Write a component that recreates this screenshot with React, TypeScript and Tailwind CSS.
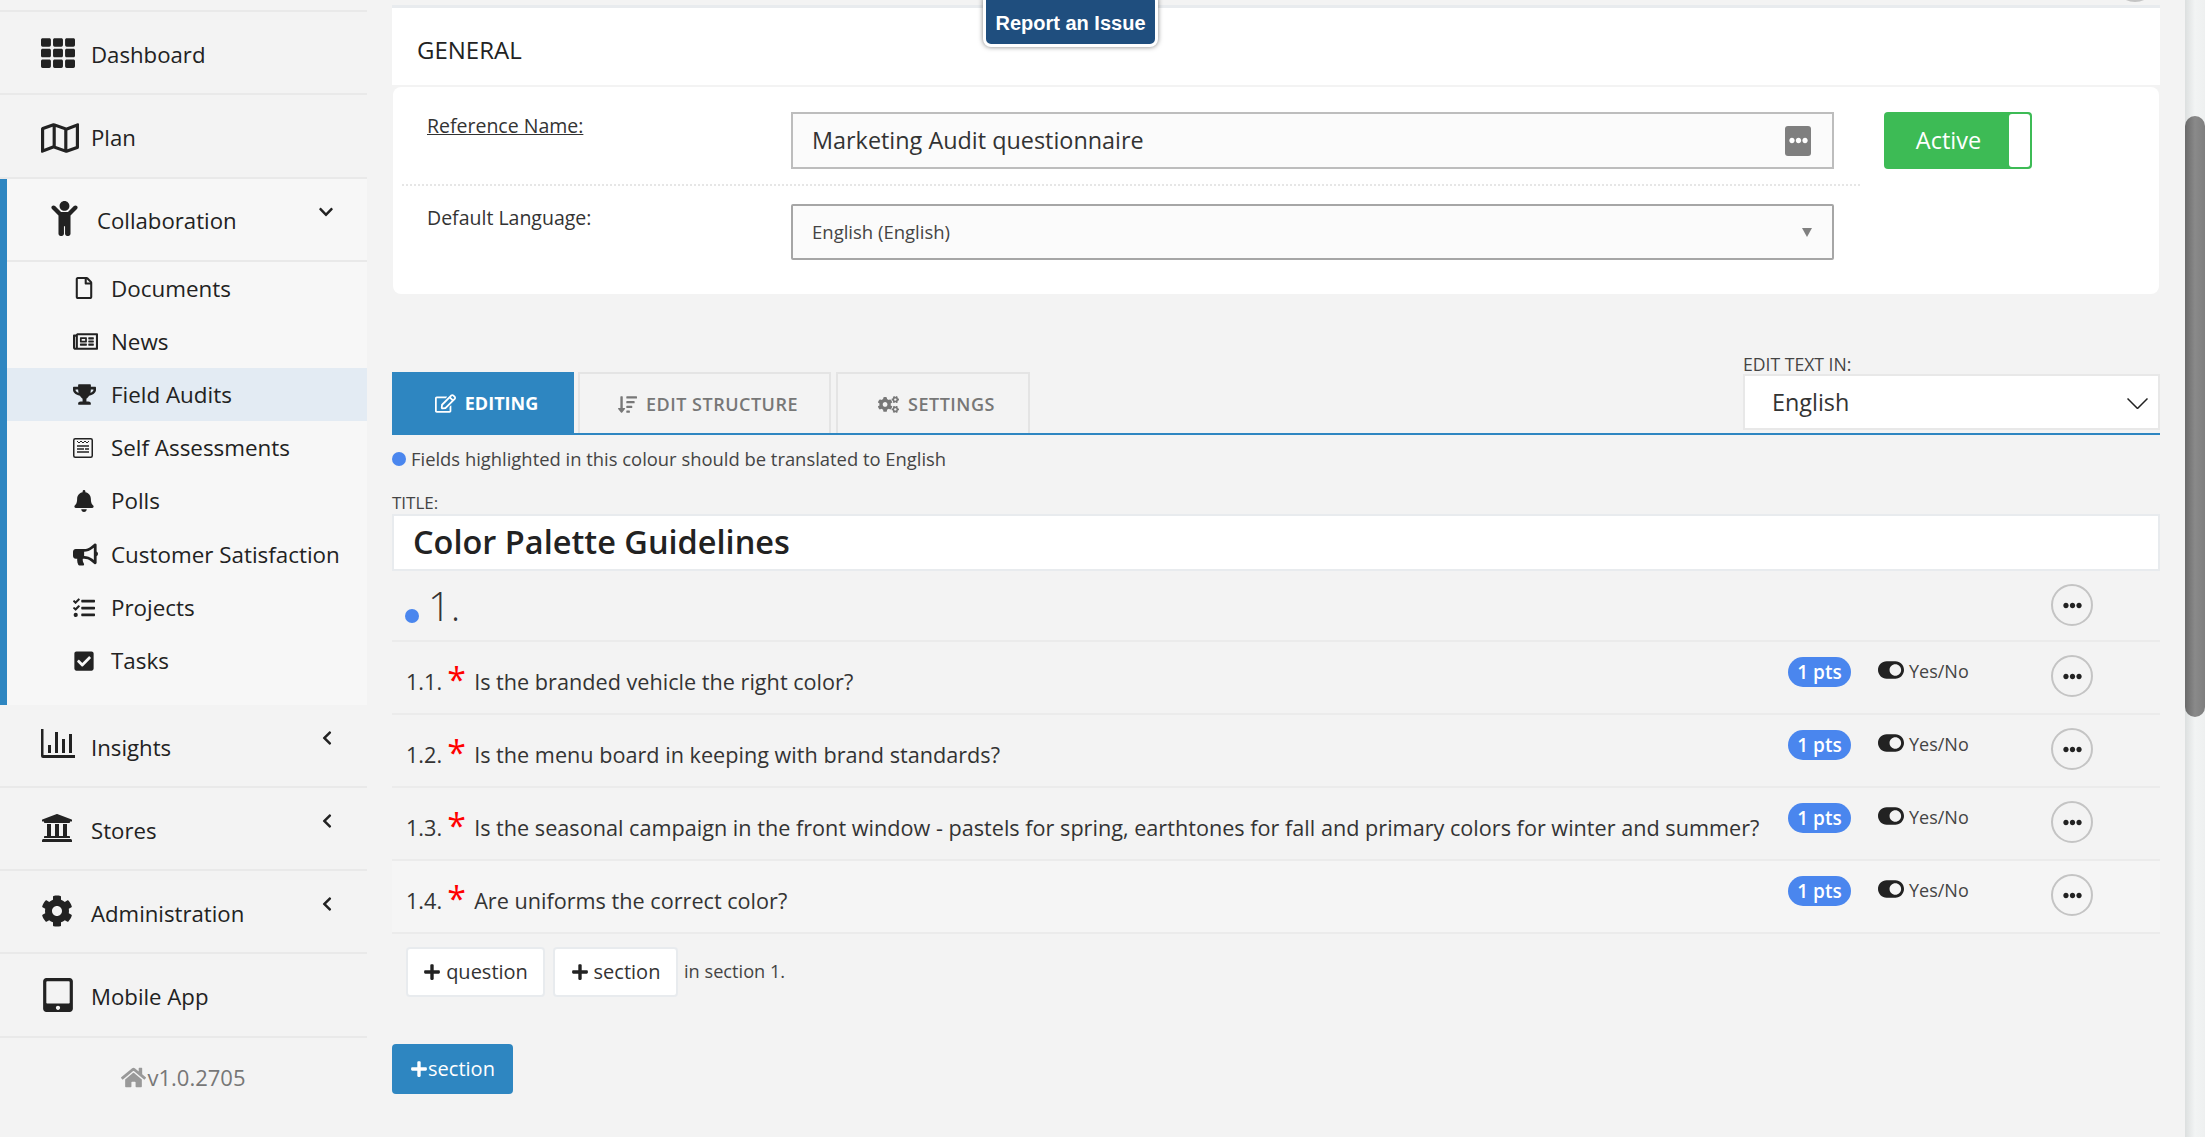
import type { ReactNode } from 'react'
import {
  FaBell,
  FaBullhorn,
  FaCheckSquare,
  FaChevronDown,
  FaChevronLeft,
  FaChild,
  FaCog,
  FaCogs,
  FaEllipsisH,
  FaHome,
  FaPlus,
  FaRegEdit,
  FaRegFile,
  FaRegMap,
  FaRegNewspaper,
  FaSortAmountDown,
  FaTabletAlt,
  FaTasks,
  FaTh,
  FaToggleOn,
  FaTrophy,
  FaUniversity,
} from 'react-icons/fa'

function BarsIcon() {
  return (
    <svg viewBox="0 0 34 30" className="h-[30px] w-[34px]" fill="#222">
      <path d="M0 0h2.5v26H34v3H2a2 2 0 0 1-2-2z" />
      <path d="M7 16h3v8H7zM14 3h3v21h-3zM21 10h3v14h-3zM28 5h3v19h-3z" />
    </svg>
  )
}

function AssessIcon() {
  return (
    <svg viewBox="0 0 20 20" className="h-[20px] w-[20px]" fill="none" stroke="#222">
      <rect x="0.75" y="0.75" width="18.5" height="18.5" rx="1.5" strokeWidth="1.5" />
      <path d="M4 3l2 2 2-2 2 2 2-2 2 2 2-2" strokeWidth="1" />
      <path d="M4 8h12M4 11h7M4 14h12M12 11h4" strokeWidth="1.5" />
    </svg>
  )
}

function MainItem({ icon, label, caret }: { icon: ReactNode; label: string; caret?: boolean }) {
  return (
    <div className="flex h-[83.3px] items-start border-b-2 border-[#e9e9e9] pl-[41px] pr-[32px] pt-[24px]">
      <span className="flex w-[50px] shrink-0 items-center">{icon}</span>
      <span className="mt-[4px] text-[22.2px] leading-[30px] text-[#222]">{label}</span>
      {caret && <FaChevronLeft className="ml-auto mt-[1px] text-[16px] text-[#222]" />}
    </div>
  )
}

function SubItem({ icon, label, active }: { icon: ReactNode; label: string; active?: boolean }) {
  return (
    <div className={`flex h-[53.2px] items-center pl-[66px] ${active ? 'bg-[#e3ebf3]' : ''}`}>
      <span className="flex w-[38px] shrink-0 items-center text-[#222]">{icon}</span>
      <span className="text-[22.4px] text-[#222]">{label}</span>
    </div>
  )
}

function Sidebar() {
  return (
    <aside className="w-[367px] shrink-0 pt-[10px]">
      <div className="border-t-2 border-[#e9e9e9]">
        <MainItem icon={<FaTh className="text-[34px] text-[#222]" />} label="Dashboard" />
        <MainItem icon={<FaRegMap className="text-[38px] text-[#222]" />} label="Plan" />
      </div>
      <div className="h-[526px] border-l-[7px] border-[#2e86c1] bg-[#f7f7f7]">
        <div className="flex h-[83.3px] items-start border-b-2 border-[#e9e9e9] pl-[40px] pr-[33px] pt-[22px]">
          <span className="flex w-[50px] shrink-0 items-center">
            <FaChild className="text-[35px] text-[#222]" />
          </span>
          <span className="mt-[5px] text-[22.2px] leading-[30px] text-[#222]">Collaboration</span>
          <FaChevronDown className="ml-auto mt-[3px] text-[16px] text-[#222]" />
        </div>
        <SubItem icon={<FaRegFile className="text-[22px]" />} label="Documents" />
        <SubItem icon={<FaRegNewspaper className="text-[25px]" />} label="News" />
        <SubItem icon={<FaTrophy className="text-[23px]" />} label="Field Audits" active />
        <SubItem icon={<AssessIcon />} label="Self Assessments" />
        <SubItem icon={<FaBell className="text-[22px]" />} label="Polls" />
        <SubItem icon={<FaBullhorn className="text-[25px]" />} label="Customer Satisfaction" />
        <SubItem icon={<FaTasks className="text-[22px]" />} label="Projects" />
        <SubItem icon={<FaCheckSquare className="text-[22px]" />} label="Tasks" />
      </div>
      <MainItem icon={<BarsIcon />} label="Insights" caret />
      <MainItem icon={<FaUniversity className="text-[32px] text-[#222]" />} label="Stores" caret />
      <MainItem icon={<FaCog className="text-[32px] text-[#222]" />} label="Administration" caret />
      <MainItem icon={<FaTabletAlt className="text-[34px] text-[#222]" />} label="Mobile App" />
      <div className="mt-[23px] flex items-center justify-center gap-[1px] text-[22px] text-[#777]">
        <FaHome className="text-[25px] text-[#999]" />
        <span>v1.0.2705</span>
      </div>
    </aside>
  )
}

function General() {
  return (
    <>
      <div className="flex h-[80px] items-center border-t-[3px] border-[#e8ebee] bg-white pl-[25px] pt-[7px] text-[24px] text-[#222]">
        GENERAL
      </div>
      <div className="mx-[1px] mt-[2px] flex h-[207px] rounded-[8px] bg-white pl-[9px] pt-[25px]">
        <div className="w-[1458px] shrink-0">
          <div className="flex h-[74px] border-b-2 border-dotted border-[#e6e6e6]">
            <span className="w-[389px] pl-[25px] pt-[1px] text-[19.5px] leading-[26px] text-[#333] underline">
              Reference Name:
            </span>
            <div className="flex h-[57px] w-[1043px] items-center justify-between border-2 border-[#bdbdbd] bg-[#fbfbfb] pl-[19px] pr-[21px] text-[23.4px] text-[#333]">
              Marketing Audit questionnaire
              <span className="flex h-[30px] w-[26px] items-center justify-center rounded-[3px] bg-[#7f7f7f]">
                <FaEllipsisH className="text-[19px] text-white" />
              </span>
            </div>
          </div>
          <div className="flex pt-[18px]">
            <span className="w-[389px] pl-[25px] pt-[1px] text-[19.5px] leading-[26px] text-[#333]">
              Default Language:
            </span>
            <div className="flex h-[56px] w-[1043px] items-center justify-between rounded-[2px] border-2 border-[#a6a6a6] bg-[#fbfbfb] pl-[19px] pr-[20px] text-[18.5px] text-[#444]">
              English (English)
              <span className="h-0 w-0 border-x-[5px] border-t-[9px] border-x-transparent border-t-[#808080]" />
            </div>
          </div>
        </div>
        <div className="ml-[24px] flex h-[57px] w-[148px] items-center rounded-[4px] bg-[#3dbb55] p-[2px]">
          <span className="flex-1 pl-[2px] text-center text-[23.5px] text-white">Active</span>
          <span className="h-full w-[21px] rounded-[3px] bg-white" />
        </div>
      </div>
    </>
  )
}

function Tab({ icon, label, width }: { icon: ReactNode; label: string; width: string }) {
  return (
    <div
      className={`mr-[5px] flex h-[61px] items-center justify-center gap-[9px] border-2 border-b-0 border-[#e4e4e4] pl-[7px] pt-[2px] text-[18px] font-semibold tracking-[0.5px] text-[#777] ${width}`}
    >
      {icon}
      {label}
    </div>
  )
}

function Tabs() {
  return (
    <div className="mt-[60px] flex h-[81px] items-end border-b-[2px] border-[#2e86c1]">
      <div className="mr-[4px] flex h-[61px] w-[182px] items-center justify-center gap-[9px] bg-[#2e86c1] pl-[7px] pt-[2px] text-[18px] font-bold text-white">
        <FaRegEdit className="text-[21px]" />
        EDITING
      </div>
      <Tab icon={<FaSortAmountDown className="text-[19px]" />} label="EDIT STRUCTURE" width="w-[253px]" />
      <Tab icon={<FaCogs className="text-[21px]" />} label="SETTINGS" width="w-[194px]" />
      <div className="ml-auto mb-[3px] flex w-[417px] flex-col">
        <span className="text-[17.6px] leading-[20px] text-[#444]">EDIT TEXT IN:</span>
        <div className="flex h-[56px] items-center justify-between border-2 border-[#e8e8e8] bg-white pl-[27px] pr-[10px] pt-[2px] text-[23.4px] text-[#333]">
          English
          <svg viewBox="0 0 21 11" className="h-[11px] w-[21px]" fill="none" stroke="#222" strokeWidth="1.5">
            <path d="M0.5 0.5l10 10 10-10" />
          </svg>
        </div>
      </div>
    </div>
  )
}

function Question({ num, text, light }: { num: string; text: string; light?: boolean }) {
  return (
    <div className={`flex h-[73px] items-start border-b-2 border-[#ebebeb] pt-[13px] ${light ? 'bg-[#f5f5f5]' : ''}`}>
      <div className="flex w-[1396px] items-start pl-[14px]">
        <span className="mt-[12px] text-[21.65px] leading-[30px] text-[#333]">{num}</span>
        <span className="ml-[5px] mt-[7px] w-[27px] text-[34px] leading-[34px] text-[#f00]">*</span>
        <span className="mt-[12px] text-[21.65px] leading-[30px] text-[#333]">{text}</span>
      </div>
      <span className="mt-[2px] flex h-[30px] w-[63px] items-center justify-center rounded-full bg-[#4a86ee] text-[19px] font-semibold text-white">
        1 pts
      </span>
      <FaToggleOn className="ml-[27px] mt-[2px] text-[26px] text-[#222]" />
      <span className="ml-[5px] mt-[3px] w-[142px] text-[18px] leading-[26px] text-[#444]">Yes/No</span>
      <MoreButton />
    </div>
  )
}

function MoreButton() {
  return (
    <span className="flex h-[42px] w-[42px] shrink-0 items-center justify-center rounded-full border-2 border-[#c4c4c4]">
      <FaEllipsisH className="text-[19px] text-[#222]" />
    </span>
  )
}

function Content() {
  return (
    <main className="w-[1768px] shrink-0 pt-[5px]">
      <General />
      <Tabs />
      <div className="flex h-[48px] items-center gap-[5px] text-[18.4px] text-[#444]">
        <span className="h-[14px] w-[14px] rounded-full bg-[#4a86ee]" />
        Fields highlighted in this colour should be translated to English
      </div>
      <div className="mt-[10px] pb-[1px] text-[17px] leading-[20px] text-[#444]">TITLE:</div>
      <div className="flex h-[57px] items-center border-2 border-[#e8ebee] bg-white pl-[19px] text-[32.5px] font-semibold text-[#222]">
        Color Palette Guidelines
      </div>
      <div className="flex h-[71px] items-start border-b-2 border-[#ebebeb] pl-[13px] pt-[13px]">
        <div className="flex w-[1646px] items-end">
          <span className="mb-[5px] h-[14px] w-[14px] rounded-full bg-[#4a86ee]" />
          <span className="ml-[9px] text-[40px] font-light leading-[44px] text-[#333]">1.</span>
        </div>
        <MoreButton />
      </div>
      <Question num="1.1." text="Is the branded vehicle the right color?" />
      <Question num="1.2." text="Is the menu board in keeping with brand standards?" />
      <Question
        num="1.3."
        text="Is the seasonal campaign in the front window - pastels for spring, earthtones for fall and primary colors for winter and summer?"
      />
      <Question num="1.4." text="Are uniforms the correct color?" light />
      <div className="flex items-center pl-[14px] pt-[13px]">
        <button className="flex h-[50px] w-[139px] items-center justify-center gap-[5px] rounded-[4px] border-2 border-[#e8ebee] bg-white text-[20px] text-[#333]">
          <FaPlus className="text-[18px] text-[#222]" />
          question
        </button>
        <button className="ml-[8px] flex h-[50px] w-[125px] items-center justify-center gap-[5px] rounded-[4px] border-2 border-[#e8ebee] bg-white text-[20px] text-[#333]">
          <FaPlus className="text-[18px] text-[#222]" />
          section
        </button>
        <span className="ml-[6px] text-[18.2px] text-[#444]">in section 1.</span>
      </div>
      <button className="mt-[47px] flex h-[50px] w-[121px] items-center justify-center rounded-[4px] bg-[#2e86c1] text-[20px] text-white">
        <FaPlus className="text-[18px]" />
        section
      </button>
    </main>
  )
}

function Scrollbar() {
  return (
    <div className="ml-auto h-full w-[20px] bg-gradient-to-r from-[#dcdfdf] via-[#f2f4f4] to-[#eef0f0]">
      <div className="mt-[116px] h-[601px] rounded-[10px] bg-gradient-to-r from-[#6a6a6a] via-[#8a8a8a] to-[#7e7e7e]" />
    </div>
  )
}

export default function App() {
  return (
    <div className="relative flex h-[1137px] overflow-hidden bg-[#f3f3f3] font-['Open_Sans',sans-serif]">
      <Sidebar />
      <div className="w-[25px] shrink-0" />
      <Content />
      <Scrollbar />
      <div className="absolute left-[983px] top-[-7px] flex h-[54px] w-[175px] items-center justify-center rounded-[8px] border-[3px] border-white bg-[#1f4e7e] pt-[6px] font-['Liberation_Sans',sans-serif] text-[20px] font-bold text-white shadow-[0_0_5px_rgba(0,0,0,0.5)]">
        Report an Issue
      </div>
      <span className="absolute right-[49px] top-[-40px] h-[42px] w-[42px] rounded-full border-2 border-[#c4c4c4] bg-white" />
    </div>
  )
}
